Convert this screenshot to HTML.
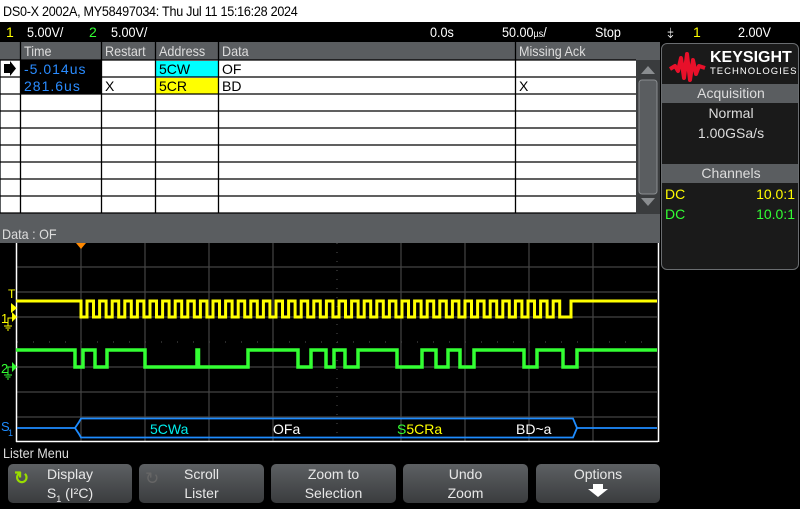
<!DOCTYPE html>
<html><head><meta charset="utf-8"><style>
*{margin:0;padding:0;box-sizing:border-box}
body{width:800px;height:503px;background:#000;position:relative;overflow:hidden;font-family:"Liberation Sans",sans-serif;}
.a{position:absolute;white-space:nowrap}
.t{font-size:14px;line-height:16px}
.c{transform:scaleX(0.9);transform-origin:left top}
.btn{position:absolute;top:464px;height:39px;border-radius:5px;background:linear-gradient(#5d6063,#3a3c3e);color:#e8e8e8;font-size:14px;text-align:center;line-height:19px;padding-top:1px}
</style></head><body>
<div class="a" style="left:0;top:0;width:800px;height:22px;background:#fff"></div>
<div class="a c" style="left:3px;top:0;color:#000;font-size:14px;line-height:22px;letter-spacing:-0.3px">DS0-X 2002A, MY58497034: Thu Jul 11 15:16:28 2024</div>
<div class="a t" style="top:24px;left:6px;color:#ff0">1</div>
<div class="a t c" style="top:24px;left:27px;color:#fff">5.00V/</div>
<div class="a t" style="top:24px;left:89px;color:#3f3">2</div>
<div class="a t c" style="top:24px;left:111px;color:#fff">5.00V/</div>
<div class="a t c" style="top:24px;left:430px;color:#fff">0.0s</div>
<div class="a t c" style="top:24px;left:502px;color:#fff">50.00<span style="font-size:10px">µs</span>/</div>
<div class="a t c" style="top:24px;left:595px;color:#fff">Stop</div>
<div class="a t" style="top:24px;left:667px;color:#fff">⤈</div>
<div class="a t" style="top:24px;left:693px;color:#ff0">1</div>
<div class="a t c" style="top:24px;left:738px;color:#fff">2.00V</div>

<div class="a" style="left:0;top:42px;width:660px;height:201px;background:#5a5d60"></div>
<div class="a" style="left:1px;top:60px;width:635px;height:153px;background:#fff"></div>
<div class="a" style="left:20px;top:60px;width:81px;height:34px;background:#000"></div>
<div class="a" style="left:156px;top:61px;width:62px;height:16px;background:#0ff"></div>
<div class="a" style="left:156px;top:78px;width:62px;height:16px;background:#ff0"></div>
<svg class="a" style="left:0;top:42px" width="660" height="172">
<g stroke="#000" stroke-width="1.3">
<line x1="0" y1="18" x2="636" y2="18"/><line x1="0" y1="35" x2="636" y2="35"/><line x1="0" y1="52" x2="636" y2="52"/><line x1="0" y1="69" x2="636" y2="69"/><line x1="0" y1="86" x2="636" y2="86"/><line x1="0" y1="103" x2="636" y2="103"/><line x1="0" y1="120" x2="636" y2="120"/><line x1="0" y1="137" x2="636" y2="137"/><line x1="0" y1="154" x2="636" y2="154"/><line x1="0" y1="171" x2="636" y2="171"/>
<line x1="20.5" y1="0" x2="20.5" y2="171"/><line x1="101.5" y1="0" x2="101.5" y2="171"/><line x1="155.5" y1="0" x2="155.5" y2="171"/><line x1="218.5" y1="0" x2="218.5" y2="171"/><line x1="515.5" y1="0" x2="515.5" y2="171"/>
</g>
<polygon points="4,22 10,22 10,19 16,26.5 10,34 10,31 4,31" fill="#000"/>
<rect x="636" y="18" width="24" height="154" fill="#3a3c3e"/>
<polygon points="641,32 648,24 655,32" fill="#8a8d90"/>
<rect x="639" y="38" width="18" height="114" rx="3" fill="#5a5d60" stroke="#8a8d90"/>
<polygon points="641,156 655,156 648,164" fill="#8a8d90"/>
</svg>
<div class="a t c" style="left:24px;top:43px;color:#ddd">Time</div>
<div class="a t c" style="left:105px;top:43px;color:#ddd">Restart</div>
<div class="a t c" style="left:159px;top:43px;color:#ddd">Address</div>
<div class="a t c" style="left:222px;top:43px;color:#ddd">Data</div>
<div class="a t c" style="left:519px;top:43px;color:#ddd">Missing Ack</div>
<div class="a t" style="left:24px;top:61px;color:#2a8cff;letter-spacing:1px">-5.014us</div>
<div class="a t" style="left:24px;top:78px;color:#2a8cff;letter-spacing:1px">281.6us</div>
<div class="a t" style="left:159px;top:61px;color:#000">5CW</div>
<div class="a t" style="left:159px;top:78px;color:#000">5CR</div>
<div class="a t" style="left:222px;top:61px;color:#000">OF</div>
<div class="a t" style="left:222px;top:78px;color:#000">BD</div>
<div class="a t" style="left:105px;top:78px;color:#000">X</div>
<div class="a t" style="left:519px;top:78px;color:#000">X</div>
<div class="a t c" style="left:2px;top:226px;color:#ddd">Data : OF</div>

<div class="a" style="left:661px;top:43px;width:138px;height:227px;border:1.5px solid #6a6d70;border-radius:6px;background:#1a1a1a;overflow:hidden">
<svg class="a" style="left:7px;top:8px" width="38" height="30"><path d="M1 17 L6 14 L9 19 L12 6 L15 26 L18 2 L21 28 L24 8 L27 22 L30 14 L36 16" stroke="#e8102a" stroke-width="4" fill="none" stroke-linejoin="round"/></svg>
<div class="a" style="left:48px;top:5px;color:#fff;font-weight:bold;font-size:16px">KEYSIGHT</div>
<div class="a" style="left:48px;top:22px;color:#fff;font-size:9.5px;letter-spacing:1px">TECHNOLOGIES</div>
<div class="a" style="left:0;top:40px;width:138px;height:19px;background:#5a5d60;color:#ddd;font-size:14px;text-align:center;line-height:19px">Acquisition</div>
<div class="a" style="left:0;top:61px;width:138px;text-align:center;color:#ddd;font-size:14px">Normal</div>
<div class="a" style="left:0;top:81px;width:138px;text-align:center;color:#ddd;font-size:14px">1.00GSa/s</div>
<div class="a" style="left:0;top:120px;width:138px;height:19px;background:#5a5d60;color:#ddd;font-size:14px;text-align:center;line-height:19px">Channels</div>
<div class="a t" style="left:3px;top:142px;color:#ff0">DC</div>
<div class="a t" style="right:3px;top:142px;color:#ff0">10.0:1</div>
<div class="a t" style="left:3px;top:162px;color:#3f3">DC</div>
<div class="a t" style="right:3px;top:162px;color:#3f3">10.0:1</div>
</div>

<svg class="a" style="left:0;top:0" width="800" height="503">
<g stroke="#444" stroke-width="1.2">
<line x1="17" y1="267" x2="657" y2="267"/><line x1="17" y1="292" x2="657" y2="292"/><line x1="17" y1="317" x2="657" y2="317"/><line x1="17" y1="342" x2="657" y2="342" stroke-dasharray="1 15"/><line x1="17" y1="367" x2="657" y2="367"/><line x1="17" y1="392" x2="657" y2="392"/><line x1="17" y1="417" x2="657" y2="417"/>
<line x1="81" y1="243" x2="81" y2="441"/><line x1="145" y1="243" x2="145" y2="441"/><line x1="209" y1="243" x2="209" y2="441"/><line x1="273" y1="243" x2="273" y2="441"/><line x1="401" y1="243" x2="401" y2="441"/><line x1="465" y1="243" x2="465" y2="441"/><line x1="529" y1="243" x2="529" y2="441"/><line x1="593" y1="243" x2="593" y2="441"/>
<line x1="337" y1="243" x2="337" y2="441" stroke-dasharray="1 8"/>
</g>
<line x1="16.5" y1="243" x2="16.5" y2="442" stroke="#fff" stroke-width="1.5"/>
<line x1="16" y1="441.5" x2="658" y2="441.5" stroke="#fff" stroke-width="1.5"/>
<line x1="658.5" y1="243" x2="658.5" y2="442" stroke="#fff" stroke-width="1.5"/>
<polygon points="76,243 86,243 81,249" fill="#f80"/>
<path d="M16 301 H81 V317 H87 V301 H93.5 V317 H99.6 V301 H106.1 V317 H112.2 V301 H118.7 V317 H124.8 V301 H131.3 V317 H137.4 V301 H143.9 V317 H150 V301 H156.5 V317 H162.6 V301 H169.1 V317 H175.2 V301 H181.7 V317 H187.8 V301 H194.3 V317 H200.4 V301 H206.9 V317 H213 V301 H219.5 V317 H225.6 V301 H232.1 V317 H238.2 V301 H244.7 V317 H250.8 V301 H257.3 V317 H263.4 V301 H269.9 V317 H276 V301 H282.5 V317 H288.6 V301 H295.1 V317 H301.2 V301 H307.7 V317 H313.8 V301 H320.3 V317 H326.4 V301 H332.9 V317 H339 V301 H345.5 V317 H351.6 V301 H358.1 V317 H364.2 V301 H370.7 V317 H376.8 V301 H383.3 V317 H389.4 V301 H395.9 V317 H402 V301 H408.5 V317 H414.6 V301 H421.1 V317 H427.2 V301 H433.7 V317 H439.8 V301 H446.3 V317 H452.4 V301 H458.9 V317 H465 V301 H471.5 V317 H477.6 V301 H484.1 V317 H490.2 V301 H496.7 V317 H502.8 V301 H509.3 V317 H515.4 V301 H521.9 V317 H528 V301 H534.5 V317 H540.6 V301 H547.1 V317 H553.2 V301 H559.7 V317 H571 V301 H657" stroke="#ff0" stroke-width="3" fill="none"/>
<path d="M16 350 H75 V367 H83 V350 H95 V367 H107 V350 H145 V367 H197 V350 H198.5 V367 H248 V350 H298 V367 H311 V350 H326 V367 H334 V350 H345 V367 H358 V350 H397 V367 H422 V350 H436 V367 H448 V350 H460 V367 H474 V350 H524 V367 H537 V350 H563 V367 H577 V350 H657" stroke="#3f3" stroke-width="3.5" fill="none"/>
<path d="M17 428 H75 L79 422 L81 418.5 H573 L577 428 L573 437.5 H81 L79 434 L75 428 M577 428 H657" stroke="#1e8cff" stroke-width="1.8" fill="none"/>
<text x="150" y="434" fill="#0ee" font-size="14" font-family="Liberation Sans">5CWa</text>
<text x="273" y="434" fill="#fff" font-size="14" font-family="Liberation Sans">OFa</text>
<text x="397" y="434" fill="#3f3" font-size="14" font-family="Liberation Sans">S<tspan fill="#ff0">5CRa</tspan></text>
<text x="516" y="434" fill="#fff" font-size="14" font-family="Liberation Sans">BD~a</text>
<text x="8" y="298" fill="#ff0" font-size="12" font-family="Liberation Sans">T</text>
<polygon points="11,303 11,313 17,308" fill="#ff0"/>
<text x="1" y="323" fill="#ff0" font-size="13" font-family="Liberation Sans">1</text>
<path d="M8 326 V318 H12" stroke="#ff0" fill="none"/><polygon points="12,312 12,322 17,317" fill="#ff0"/>
<path d="M4 326 H12 M5.5 328 H10.5 M7 330 H9" stroke="#ff0"/>
<text x="1" y="373" fill="#3f3" font-size="13" font-family="Liberation Sans">2</text>
<path d="M8 375 V367 H12" stroke="#3f3" fill="none"/><polygon points="12,362 12,372 17,367" fill="#3f3"/>
<path d="M4 375 H12 M5.5 377 H10.5 M7 379 H9" stroke="#3f3"/>
<text x="1" y="431" fill="#1e8cff" font-size="13" font-family="Liberation Sans">S</text>
<text x="8" y="436" fill="#1e8cff" font-size="9" font-family="Liberation Sans">1</text>
</svg>

<div class="a t c" style="left:3px;top:445px;color:#ddd">Lister Menu</div>
<div class="btn" style="left:8px;width:124px"><span style="position:absolute;left:6px;top:5px;color:#9d0;font-size:18px;font-weight:bold">↻</span>Display<br>S<sub style="font-size:9px">1</sub> (I²C)</div>
<div class="btn" style="left:139px;width:125px"><span style="position:absolute;left:6px;top:5px;color:#666;font-size:17px">↻</span>Scroll<br>Lister</div>
<div class="btn" style="left:271px;width:125px">Zoom to<br>Selection</div>
<div class="btn" style="left:403px;width:125px">Undo<br>Zoom</div>
<div class="btn" style="left:536px;width:124px">Options<br><svg width="22" height="14"><polygon points="6,0 16,0 16,5 21,5 11,13 1,5 6,5" fill="#fff"/></svg></div>
</body></html>
